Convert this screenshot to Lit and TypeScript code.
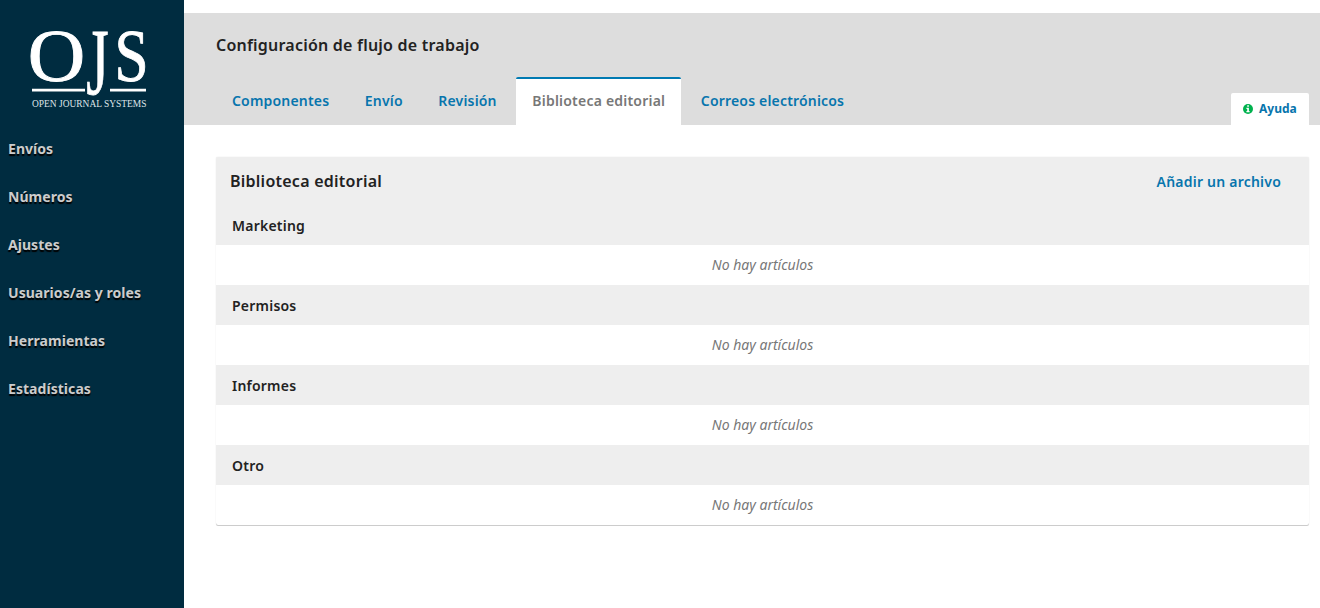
import { LitElement, html, css } from "lit";
import { customElement, property } from "lit/decorators.js";

@customElement("ojs-logo")
class OjsLogo extends LitElement {
  static styles = css`
    :host { display: block; width: 184px; height: 125px; }
    svg { display: block; }
    text { fill: #fff; font-family: "Liberation Serif", serif; }
    .letter { stroke: #fff; stroke-width: 0.9; }
    .name { font-size: 9.5px; fill: #dfe5e8; }
  `;
  render() {
    return html`<svg width="184" height="125" viewBox="0 0 184 125">
      <text class="letter" font-size="73" transform="translate(27.8 81) scale(1.09 1)">O</text>
      <text class="letter" font-size="96" transform="translate(86.3 95.4) scale(.6 1)">J</text>
      <text class="letter" font-size="73" transform="translate(114.6 81) scale(.84 1)">S</text>
      <path fill="#fff" d="M32 88.7h53v2.7H32zM110 88.7h36v2.7h-36z" />
      <text class="name" x="32" y="106.9" textLength="114.5" lengthAdjust="spacingAndGlyphs">OPEN JOURNAL SYSTEMS</text>
    </svg>`;
  }
}

@customElement("file-group")
class FileGroup extends LitElement {
  @property() label = "";
  static styles = css`
    :host { display: block; line-height: 40px; }
    .label { box-sizing: border-box; height: 40px; padding: 1px 0 0 16px; background: #eee; color: #222; font-weight: 600; letter-spacing: 0.22px; }
    .empty { height: 40px; text-align: center; font-style: italic; color: #777; }
  `;
  render() {
    return html`<div class="label">${this.label}</div><div class="empty">No hay artículos</div>`;
  }
}

@customElement("app-root")
class AppRoot extends LitElement {
  static styles = css`
    :host { display: flex; height: 608px; background: #fff; font: 14px/20px "Noto Sans", sans-serif; color: #222; overflow: hidden; }
    * { box-sizing: border-box; }
    .side { width: 184px; flex: none; background: #002c40; }
    .nav { display: flex; flex-direction: column; }
    .nav a { height: 48px; padding-left: 8px; line-height: 48px; font-weight: 700; letter-spacing: 0.05px; color: #ccc; text-shadow: 0 2px 1px #000; white-space: nowrap; }
    .main { flex: 1; min-width: 0; padding-top: 13px; }
    .head { height: 112px; padding: 20px 11px 0 32px; background: #ddd; display: grid; grid-template-rows: 44px 48px; grid-template-columns: 1fr 78px; }
    h1 { grid-column: 1 / 3; margin: 0; font-size: 16px; line-height: 24px; font-weight: 600; letter-spacing: 0.22px; }
    .tabs { display: flex; color: #0775ad; font-weight: 600; line-height: 44px; letter-spacing: 0.18px; white-space: nowrap; }
    .tab { padding: 2px 16px 0; margin-right: 3.6px; height: 48px; }
    .tab.on { background: #fff; color: #777; padding-top: 0; letter-spacing: 0.21px; border-top: 2px solid #007ab2; border-radius: 2px 2px 0 0; }
    .help { align-self: end; height: 32px; display: flex; align-items: center; gap: 6px; padding-left: 12px; background: #fff; border-radius: 2px 2px 0 0; font-size: 12px; font-weight: 700; color: #0775ad; }
    .panel { margin: 32px 11px 0 32px; border-radius: 2px; box-shadow: 0 1px 0 #ccc, 0 0 1px #ccc; }
    .bar { height: 48px; display: flex; align-items: center; justify-content: space-between; padding: 0 28px 0 14px; background: #eee; border-radius: 2px 2px 0 0; }
    h2 { margin: 0; font-size: 16px; line-height: 24px; font-weight: 600; letter-spacing: 0.25px; }
    .add { font-weight: 600; color: #0775ad; padding-top: 2px; letter-spacing: 0.22px; }
  `;
  render() {
    const nav = ["Envíos", "Números", "Ajustes", "Usuarios/as y roles", "Herramientas", "Estadísticas"];
    const tabs = ["Componentes", "Envío", "Revisión", "Biblioteca editorial", "Correos electrónicos"];
    return html`
      <aside class="side">
        <ojs-logo></ojs-logo>
        <nav class="nav">${nav.map((n) => html`<a>${n}</a>`)}</nav>
      </aside>
      <main class="main">
        <header class="head">
          <h1>Configuración de flujo de trabajo</h1>
          <div class="tabs">${tabs.map((t, i) => html`<a class="tab ${i === 3 ? "on" : ""}">${t}</a>`)}</div>
          <a class="help">
            <svg width="10" height="10" viewBox="0 0 10 10">
              <circle cx="5" cy="5" r="5" fill="#00b24e" />
              <path fill="#fff" d="M4.2 1.3h1.7v1.5H4.2zM3.4 3.7h2.5v3.4h.7v1.2H3.4V7.1h.8V4.9h-.8z" />
            </svg>
            <span>Ayuda</span>
          </a>
        </header>
        <section class="panel">
          <div class="bar"><h2>Biblioteca editorial</h2><a class="add">Añadir un archivo</a></div>
          ${["Marketing", "Permisos", "Informes", "Otro"].map((g) => html`<file-group label=${g}></file-group>`)}
        </section>
      </main>
    `;
  }
}
